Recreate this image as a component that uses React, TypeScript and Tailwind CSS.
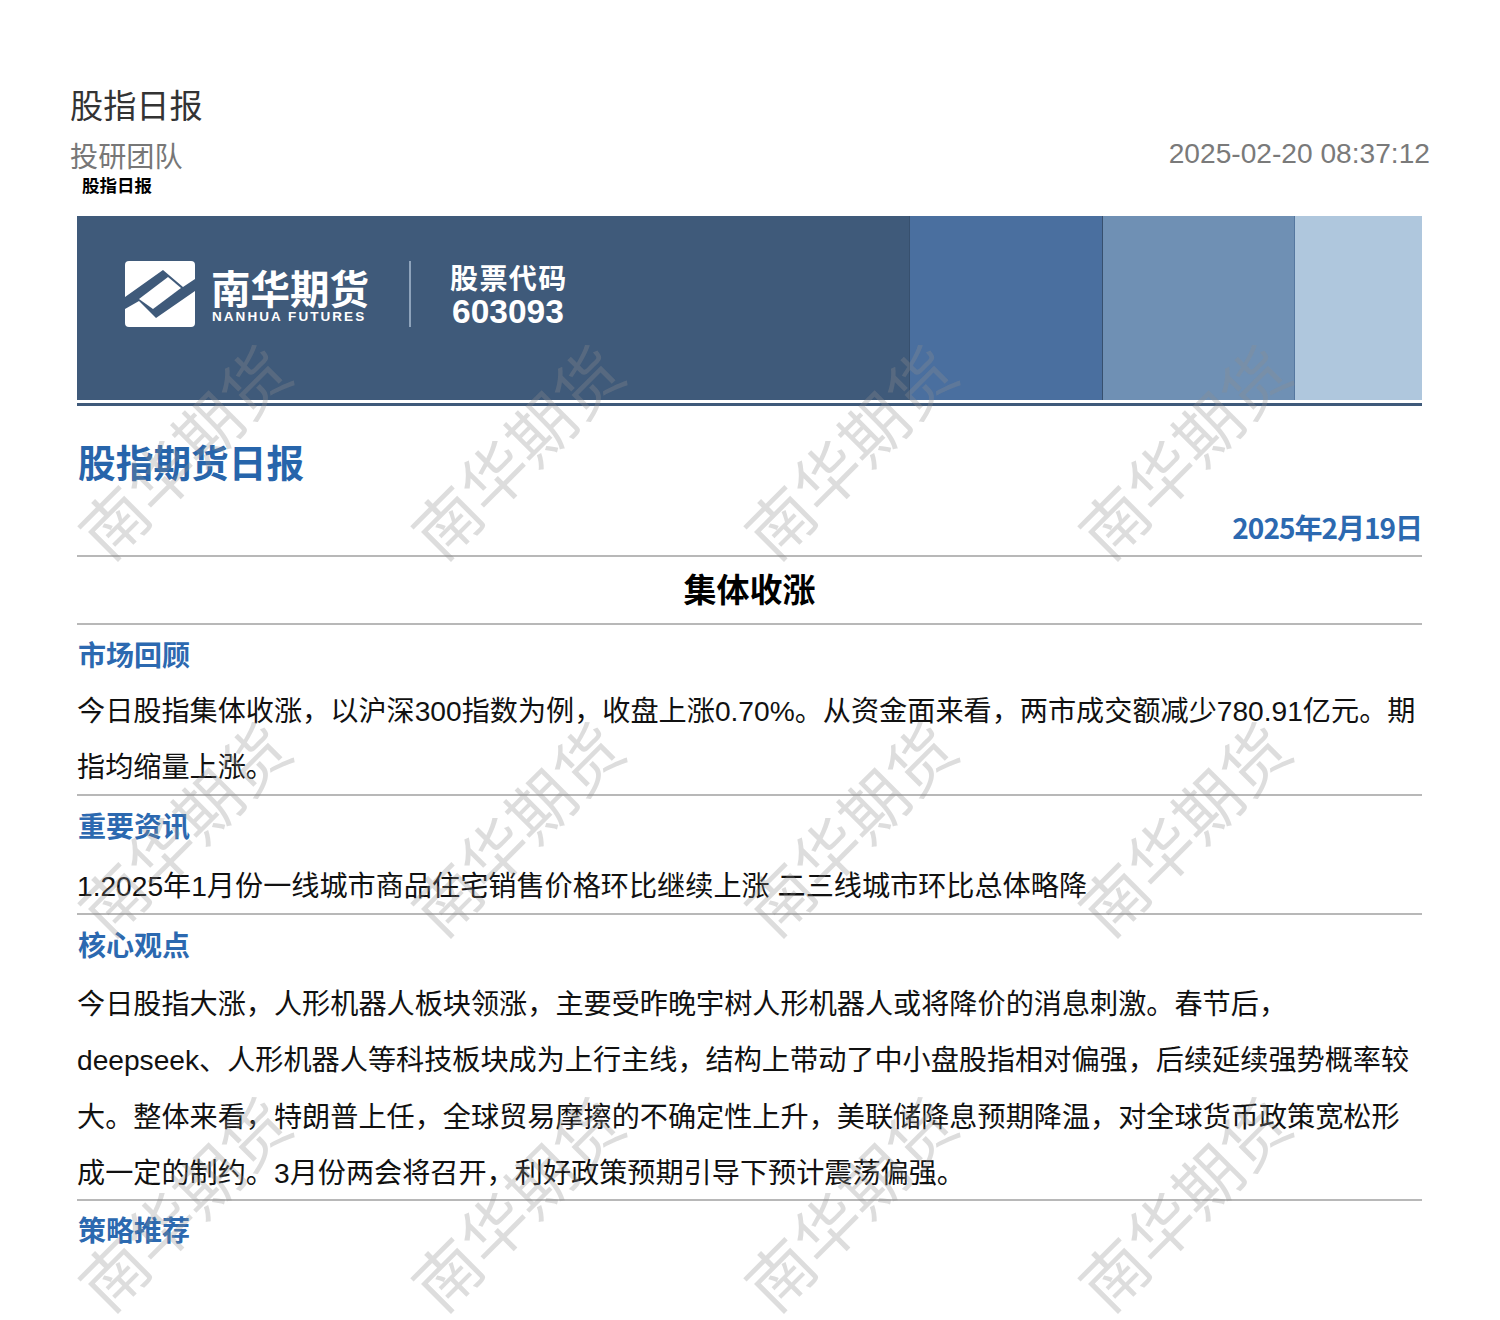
const cjk = "font-['Liberation_Sans','Noto_Sans_CJK_SC',sans-serif]"

const sections = [
  {
    title: "市场回顾",
    lines: "今日股指集体收涨，以沪深300指数为例，收盘上涨0.70%。从资金面来看，两市成交额减少780.91亿元。期指均缩量上涨。",
    gap: "h-[58.5px]",
    rule: "mt-[-2.5px]",
  },
  {
    title: "重要资讯",
    lines: "1.2025年1月份一线城市商品住宅销售价格环比继续上涨 二三线城市环比总体略降",
    gap: "h-[63px]",
    rule: "mt-[-3px]",
  },
  {
    title: "核心观点",
    lines: "今日股指大涨，人形机器人板块领涨，主要受昨晚宇树人形机器人或将降价的消息刺激。春节后，deepseek、人形机器人等科技板块成为上行主线，结构上带动了中小盘股指相对偏强，后续延续强势概率较大。整体来看，特朗普上任，全球贸易摩擦的不确定性上升，美联储降息预期降温，对全球货币政策宽松形成一定的制约。3月份两会将召开，利好政策预期引导下预计震荡偏强。",
    gap: "h-[62px]",
    rule: "mt-[-4px]",
  },
]

const marks = [
  [75, 345], [408, 345], [741, 345], [1075, 345],
  [75, 722], [408, 722], [741, 722], [1075, 722],
  [75, 1097], [408, 1097], [741, 1097], [1075, 1097],
]

function Logo() {
  return (
    <svg width="70" height="66" viewBox="0 0 70 66" className="shrink-0">
      <rect width="70" height="66" rx="4" fill="#fff" />
      <path d="M0 36 L38 9 L58 26 L70 18 V30 L31 57 L14 40 L0 48 Z" fill="#3f5a7a" />
      <path d="M14 38 L43 16 L56 27 L28 48 Z" fill="#fff" />
    </svg>
  )
}

function Rule() {
  return <div className="h-[2px] w-full bg-[#b8b8b8]" />
}

export default function App() {
  return (
    <div className={`relative h-[1320px] w-[1500px] overflow-hidden bg-white ${cjk}`}>
      <div className="flex items-start justify-between px-[70px] pt-[84px]">
        <div>
          <div className="text-[33.2px] leading-[46px] text-[#333]">股指日报</div>
          <div className="mb-[1px] mt-[7px] text-[28.15px] leading-[42px] text-[#777]">投研团队</div>
        </div>
        <div className="mt-[50px] text-[28.15px] leading-[40px] text-[#7a7a7a]">2025-02-20 08:37:12</div>
      </div>

      <div className="ml-[77px] w-[1345px]">
        <div className="mt-[-7px] ml-[5px] text-[17.5px] font-bold leading-[26px] text-black">股指日报</div>

        <div className="mt-[17px] flex h-[184px] bg-[#3f5a7a]">
          <div className="flex w-[833px] items-start border-r border-[#37506e] pl-[48px] pt-[45px]">
            <Logo />
            <div className="ml-[17px] w-[156px] text-white">
              <div className="ml-[-1px] mt-[7px] text-[39.5px] font-bold leading-[44px] whitespace-nowrap">南华期货</div>
              <div className="mt-[-3px] text-[13.5px] font-bold leading-[16px] tracking-[2.05px] whitespace-nowrap">NANHUA FUTURES</div>
            </div>
            <div className="ml-[41px] h-[66px] w-[2px] bg-[#8ea3bb]" />
            <div className="ml-[39px] text-white">
              <div className="mt-[1px] text-[28px] font-bold leading-[36px] tracking-[1.4px]">股票代码</div>
              <div className="text-[33.5px] font-bold leading-[28px] pl-[2px]">603093</div>
            </div>
          </div>
          <div className="w-[193px] border-r border-[#37506e] bg-[#4a6f9f]" />
          <div className="w-[192px] border-r border-[#55779f] bg-[#6f90b4]" />
          <div className="w-[127px] bg-[#afc7dd]" />
        </div>
        <div className="mt-[3px] h-[3px] bg-[#3f5a7a]" />

        <div className="ml-[1px] mt-[33px] text-[37.7px] font-bold leading-[50px] text-[#2765ab]">股指期货日报</div>
        <div className="mt-[16px] text-right font-['Noto_Sans_CJK_SC',sans-serif] text-[28px] font-bold leading-[44px] tracking-[-1px] text-[#2c69b0]">2025年2月19日</div>
        <div className="mt-[6px]"><Rule /></div>
        <div className="flex h-[66px] items-center justify-center pt-[1px] text-[33px] font-bold text-black">集体收涨</div>
        <Rule />

        {sections.map((s) => (
          <div key={s.title}>
            <div className={`${s.gap} pt-[13px]`}>
              <div className="ml-[1px] text-[28px] font-bold leading-[38px] text-[#2c69b0]">{s.title}</div>
            </div>
            <p className="text-[28.15px] leading-[56.5px] text-[#111]">{s.lines}</p>
            <div className={s.rule}><Rule /></div>
          </div>
        ))}
        <div className="ml-[1px] pt-[12px] text-[28px] font-bold leading-[38px] text-[#2c69b0]">策略推荐</div>
      </div>

      {marks.map(([x, y]) => (
        <div
          key={`${x}-${y}`}
          style={{ left: x, top: y }}
          className="pointer-events-none absolute h-[218px] w-[222px]"
        >
          <div className="absolute left-1/2 top-1/2 -translate-x-1/2 -translate-y-1/2 -rotate-45 whitespace-nowrap text-[66px] leading-none text-[#8f8f8f]/30">
            南华期货
          </div>
        </div>
      ))}
    </div>
  )
}
